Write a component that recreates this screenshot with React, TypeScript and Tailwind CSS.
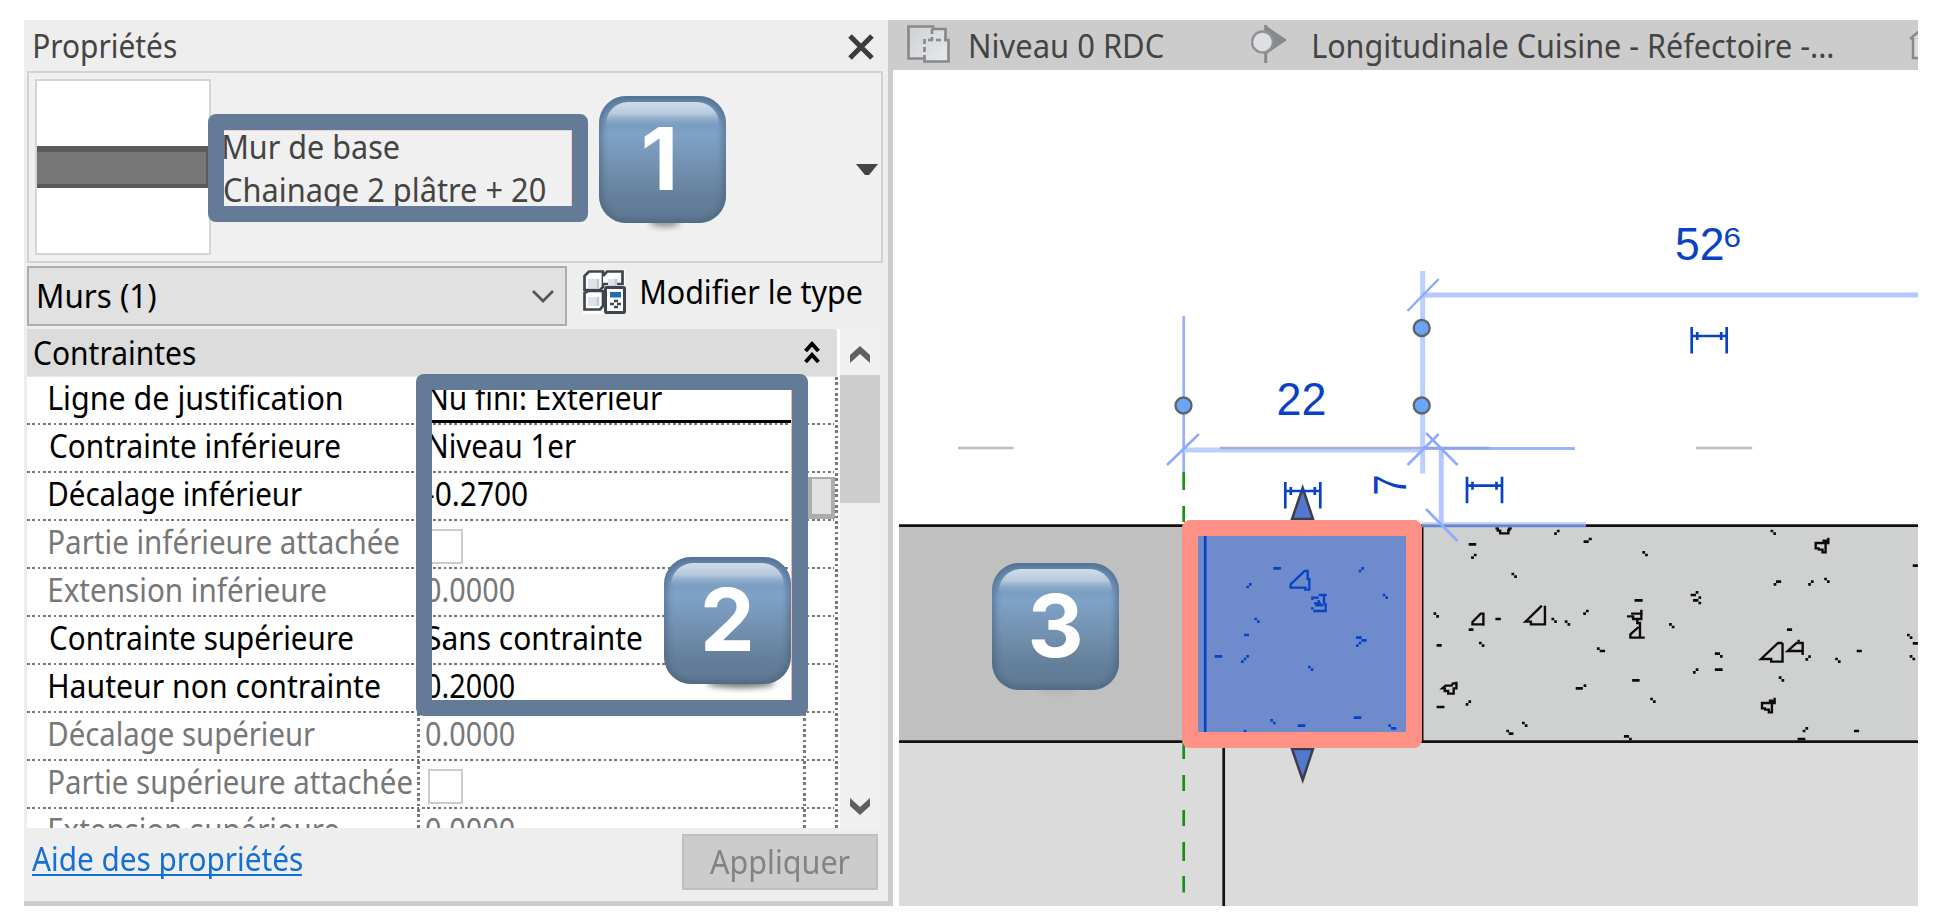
import { useLayoutEffect, useRef } from "react";
import type { ReactNode } from "react";

/** Single line of text whose inked width is fitted to `w` pixels. */
function Fit({ w, children, className = "" }: { w: number; children: string; className?: string }) {
  const ref = useRef<HTMLSpanElement>(null);
  useLayoutEffect(() => {
    const el = ref.current;
    const ctx = document.createElement("canvas").getContext("2d");
    if (!el || !ctx) return;
    const cs = getComputedStyle(el);
    ctx.font = `${cs.fontWeight} ${cs.fontSize} ${cs.fontFamily}`;
    const m = ctx.measureText(children);
    const s = w / (m.actualBoundingBoxLeft + m.actualBoundingBoxRight);
    el.style.transform = `translateX(${m.actualBoundingBoxLeft * s}px) scaleX(${s})`;
  }, [w, children]);
  return (
    <span className={"block shrink-0 whitespace-nowrap " + className} style={{ width: w }}>
      <span ref={ref} className="inline-block origin-left">
        {children}
      </span>
    </span>
  );
}

function Badge({ n, shadow, cx = 63.5 }: { n: string; shadow: "narrow" | "wide" | "faint"; cx?: number }) {
  const sh = {
    narrow: { cx: 66, rx: 15, o: 0.4 },
    wide: { cx: 77, rx: 34, o: 0.55 },
    faint: { cx: 66, rx: 20, o: 0.06 },
  }[shadow];
  return (
    <svg width="147" height="147" viewBox="-10 -10 147 147" className="block">
      <defs>
        <linearGradient id={"body" + n} x1="0" y1="0" x2="0" y2="1">
          <stop offset="0" stopColor="#6487ab" />
          <stop offset="0.3" stopColor="#7fa2c7" />
          <stop offset="0.48" stopColor="#7796b7" />
          <stop offset="0.8" stopColor="#647f9a" />
          <stop offset="1" stopColor="#5f7992" />
        </linearGradient>
        <linearGradient id={"gloss" + n} x1="0" y1="0" x2="0" y2="1">
          <stop offset="0" stopColor="#cfdde9" />
          <stop offset="0.45" stopColor="#b6cadc" />
          <stop offset="1" stopColor="#7fa2c7" stopOpacity="0" />
        </linearGradient>
        <filter id={"soft" + n} x="-50%" y="-50%" width="200%" height="200%">
          <feGaussianBlur stdDeviation="3" />
        </filter>
        <clipPath id={"clip" + n}>
          <rect width="127" height="127" rx="27" />
        </clipPath>
      </defs>
      <ellipse cx={sh.cx} cy="126" rx={sh.rx} ry="5" fill="#000" opacity={sh.o} filter={`url(#soft${n})`} />
      <rect width="127" height="127" rx="27" fill={`url(#body${n})`} />
      <g clipPath={`url(#clip${n})`}>
        <rect width="127" height="127" rx="27" fill="none" stroke="#425c78" strokeWidth="6" opacity="0.65" filter={`url(#soft${n})`} />
      </g>
      <path d="M7 32V28A22 22 0 0 1 29 6H98A22 22 0 0 1 120 28V32Z" fill={`url(#gloss${n})`} />
      <text x={cx} y="93.5" textAnchor="middle" fontSize="87" fontWeight="700" fill="#fff" className="font-['Inter',sans-serif]">
        {n}
      </text>
    </svg>
  );
}

type Row = { label: string; w: number; dim?: boolean; value?: string; vw?: number; indent?: "a" | "b"; box?: boolean; button?: boolean; underline?: boolean };

const rows: Row[] = [
  { label: "Ligne de justification", w: 292, value: "Nu fini: Extérieur", vw: 233, indent: "b", underline: true },
  { label: "Contrainte inférieure", w: 290, value: "Niveau 1er", vw: 147, indent: "b" },
  { label: "Décalage inférieur", w: 252, value: "-0.2700", vw: 101, button: true },
  { label: "Partie inférieure attachée", w: 349, dim: true, box: true },
  { label: "Extension inférieure", w: 276, dim: true, value: "0.0000", vw: 88 },
  { label: "Contrainte supérieure", w: 303, value: "Sans contrainte", vw: 216 },
  { label: "Hauteur non contrainte", w: 330, value: "0.2000", vw: 88 },
  { label: "Décalage supérieur", w: 265, dim: true, value: "0.0000", vw: 88 },
  { label: "Partie supérieure attachée", w: 362, dim: true, box: true },
  { label: "Extension supérieure", w: 289, dim: true, value: "0.0000", vw: 88 },
];

const dotsX = "bg-[repeating-linear-gradient(90deg,#777_0_2.67px,#fff_2.67px_5.34px)]";
const dotsY = "bg-[repeating-linear-gradient(180deg,#777_0_2.67px,#fff_2.67px_5.34px)]";

function GridRow({ r }: { r: Row }) {
  return (
    <div className={"flex h-12 shrink-0 flex-col " + (r.dim ? "text-[#777]" : "text-black")}>
      <div className="flex h-[45.5px]">
        <div className="flex w-[390px] items-center pb-[3px] pl-[23px]">
          <Fit w={r.w}>{r.label}</Fit>
        </div>
        <div className={"w-[3px] " + dotsY} />
        <div className={"relative flex w-[383px] items-center pb-[3px] " + (r.indent === "b" ? "pl-[9px]" : "pl-[6px]")}>
          {r.value && <Fit w={r.vw ?? 88}>{r.value}</Fit>}
          {r.box && <div className="mt-[9px] ml-[2px] h-[35px] w-[35px] border-2 border-[#ccc] bg-white" />}
          {r.underline && <div className="absolute bottom-0 left-0 h-[3px] w-full bg-black" />}
        </div>
        <div className={"w-[3px] " + dotsY} />
        <div className="w-[29px] pt-[4px]">
          {r.button && <div className="h-[42px] w-[30px] border-t-2 border-r-[5px] border-b-[5px] border-l-[6px] border-[#adadad] bg-[#e1e1e1]" />}
        </div>
        <div className={"w-[3px] " + dotsY} />
      </div>
      <div className={"h-[2.5px] w-[807px] " + dotsX} />
    </div>
  );
}

function PropertiesPanel() {
  return (
    <section className="flex h-[886px] w-[869px] shrink-0 flex-col border-r-[5px] border-b-[5px] border-[#ccc] bg-[#eee]">
      <header className="flex h-[51px] shrink-0 items-center justify-between pr-[13px] pl-[11px] text-[#444]">
        <Fit w={141}>Propriétés</Fit>
        <svg width="28" height="26" viewBox="0 0 28 26" className="mt-0.5">
          <path d="M3 2L25 24M25 2L3 24" stroke="#3c3c3c" strokeWidth="5" />
        </svg>
      </header>

      <div className="ml-[3px] flex h-[192px] w-[856px] shrink-0 items-center border-2 border-[#d2d2d2] bg-[#f0f0f0] pl-[6px]">
        <div className="flex h-[176px] w-[176px] flex-col justify-center border-2 border-[#d4d4d4] bg-white">
          <div className="h-[42px] border-t-[6px] border-r-[3px] border-b-[4px] border-[#5a5a5a] bg-[#777]" />
        </div>
        <div className="ml-[13px] flex flex-1 flex-col pt-[1px] text-[#444]">
          <Fit w={175} className="leading-[43px]">Mur de base</Fit>
          <Fit w={321} className="leading-[43px]">Chainage 2 plâtre + 20</Fit>
        </div>
        <svg width="22" height="12" viewBox="0 0 22 12" className="mt-[5px] mr-[3px]">
          <path d="M0 0H22L13 11H9Z" fill="#444" />
        </svg>
      </div>

      <div className="mt-[3px] ml-[3px] flex h-[60px] shrink-0">
        <div className="flex w-[540px] items-center justify-between border-[2.5px] border-[#adadad] bg-[#e1e1e1] pr-[10px] pl-[10px]">
          <Fit w={117} className="text-black">Murs (1)</Fit>
          <svg width="24" height="16" viewBox="0 0 24 16">
            <path d="M2 3L12 13L22 3" fill="none" stroke="#555" strokeWidth="2.7" />
          </svg>
        </div>
        <svg width="44" height="44" viewBox="0 0 44 44" className="mt-[4px] ml-[16px]">
          <path d="M0 5L5 0H42V44H0Z" fill="#fff" />
          <g fill="#fff" stroke="#3e454e" strokeWidth="2.7">
            <path d="M1.5 6L6 1.5H20V17L17 20H1.5Z" />
            <path d="M20 6L24 1.5H39.5V14H20" />
            <path d="M1.5 23L5 21H20V36L17 39.500H1.500Z" />
          </g>
          <path d="M5 9H15V18H5ZM25 9H33V15H25ZM5 27H15V36H5Z" fill="#dfe2e8" />
          <path d="M15 9V18M15 27V36M33 9V15" stroke="#c5c9d1" strokeWidth="2.500" />
          <rect x="22.500" y="17.500" width="19" height="25" rx="1" fill="#fff" stroke="#3e454e" strokeWidth="3" />
          <rect x="27" y="22" width="11" height="5.500" fill="#2469b3" />
          <path d="M27 34H31M34 34H38M31 31H35M31 37H35" stroke="#3e454e" strokeWidth="2.300" />
        </svg>
        <div className="ml-[15px] flex items-center pb-[9px] text-black">
          <Fit w={220}>Modifier le type</Fit>
        </div>
      </div>

      <div className="mt-[3px] ml-[3px] flex h-[499px] w-[853px] shrink-0 bg-white">
        <div className="flex h-full w-[813px] flex-col overflow-hidden">
          <div className="flex h-12 w-[810px] shrink-0 items-center justify-between border-b border-[#e8e8e8] bg-[#dcdcdc] pr-[17px] pl-[7px] text-black">
            <Fit w={161}>Contraintes</Fit>
            <svg width="16" height="24" viewBox="0 0 16 24" className="mb-[2px]">
              <path d="M1.500 11L8 4L14.500 11M1.500 22L8 15L14.500 22" fill="none" stroke="#000" strokeWidth="4" />
            </svg>
          </div>
          {rows.map((r) => (
            <GridRow key={r.label} r={r} />
          ))}
        </div>
        <div className="flex w-10 flex-col items-center bg-[#f0f0f0]">
          <div className="flex h-[46px] items-center pt-1">
            <svg width="20" height="17" viewBox="0 0 20 17">
              <path d="M0 9L10 0L20 9V17L10 8L0 17Z" fill="#606060" />
            </svg>
          </div>
          <div className="h-32 w-full bg-[#cdcdcd]" />
          <svg width="20" height="17" viewBox="0 0 20 17" className="mt-auto mb-[13px]">
            <path d="M0 8L10 17L20 8V0L10 9L0 0Z" fill="#606060" />
          </svg>
        </div>
      </div>

      <footer className="flex h-[73px] items-start justify-between pr-[10px] pl-[8px]">
        <a className="mt-[12px] border-b-[2.500px] border-[#1470d5] text-[#1470d5]">
          <Fit w={270} className="h-[34px] leading-[38px]">Aide des propriétés</Fit>
        </a>
        <button className="mt-[6px] flex h-[56px] w-[196px] items-center justify-center border-2 border-[#bfbfbf] bg-[#ccc] pb-[1px] text-[#838383]">
          <Fit w={140}>Appliquer</Fit>
        </button>
      </footer>
    </section>
  );
}

function ViewTabs() {
  return (
    <nav className="flex h-[50px] shrink-0 items-center overflow-hidden bg-[#ccc] text-[#444]">
      <svg width="44" height="40" viewBox="0 0 44 40" className="mb-[3px] ml-[14px] shrink-0">
        <defs>
          <linearGradient id="plan" x1="0" y1="0" x2="1" y2="1">
            <stop offset="0" stopColor="#cfd0d3" />
            <stop offset="1" stopColor="#e8e9eb" />
          </linearGradient>
        </defs>
        <path d="M1.500 2.500H26V5H38.500V16H41.500V37.500H17.500V34.500H1.500Z" fill="url(#plan)" stroke="#87898d" strokeWidth="2.700" />
        <path d="M25 5V16M21 16H40M17.500 15V34" fill="none" stroke="#87898d" strokeWidth="2.700" strokeDasharray="5 3" />
      </svg>
      <Fit w={193} className="mt-[1px] ml-[20px]">Niveau 0 RDC</Fit>
      <svg width="36" height="38" viewBox="0 0 36 38" className="mb-[2px] ml-[87px] shrink-0">
        <path d="M14 0L36 15L14 30Z" fill="#85888c" />
        <path d="M14.700 0V38" stroke="#85888c" strokeWidth="3" />
        <circle cx="11.500" cy="17" r="10.500" fill="#dedfe1" stroke="#909296" strokeWidth="2.500" />
      </svg>
      <Fit w={519} className="mt-[2px] ml-[27px]">Longitudinale Cuisine - Réfectoire -...</Fit>
      <svg width="30" height="38" viewBox="0 0 30 38" className="ml-[76px] shrink-0">
        <path d="M1 13L14 2L28 13M4 12V32H25V12" fill="#dcdddf" stroke="#87898d" strokeWidth="2.500" />
      </svg>
    </nav>
  );
}

const fwd = (pts: number[][]) => pts.map(([x, y]) => `M${x - 8} ${y + 4}h8M${x} ${y - 4}h8`).join("");
const back = (pts: number[][]) => pts.map(([x, y]) => `M${x - 8} ${y - 4}h8M${x} ${y + 4}h8`).join("");
const dash = (pts: number[][]) => pts.map(([a, b, y]) => `M${a} ${y}H${b}`).join("");

const aggregate = [
  dash([[201, 223, 193], [279, 295, 417], [201, 215, 449], [107, 122, 496], [107, 130, 681], [686, 710, 361], [679, 701, 601], [921, 944, 569], [1132, 1147, 449], [1336, 1351, 513], [1328, 1343, 753], [1163, 1186, 777], [1500, 1515, 257], [1500, 1515, 490], [514, 535, 625], [537, 545, 617], [537, 552, 185], [552, 561, 177], [576, 584, 506], [584, 600, 513], [311, 319, 753], [318, 332, 761], [655, 670, 769], [670, 678, 777], [921, 936, 521], [936, 944, 529], [1093, 1101, 313], [1100, 1115, 305], [850, 866, 345], [865, 873, 337], [857, 873, 361], [873, 881, 353], [873, 881, 369]]),
  fwd([[216, 229], [459, 157], [544, 397], [865, 573], [200, 669], [1186, 749], [1202, 309], [1194, 534]]),
  back([[334, 286], [717, 221], [1092, 157], [1249, 301], [106, 405], [451, 421], [490, 429], [239, 493], [795, 437], [740, 661], [365, 733], [1281, 541], [1116, 597], [1491, 469], [1499, 533]]),
].join("");

const aggregateStones =
  "M244 437V401H236L212 426V433H244M424 377V433H383V425H367L415 377M706 389V417H682V409H664M676 401H710M694 417V429H702V473M716 473H674V463L698 441M1119 489V545H1086V537H1056L1106 489H1119M1178 525V489H1166V479M1178 513H1134L1162 487M1253 173V189M1236 182H1253V189H1216V205H1228M1222 209H1236V217H1245V189M1096 653V669M1079 662H1096V669H1059V685H1071M1065 689H1079V697H1088V669M165 605V625H157V641H141V633H131V625H124L133 617H151L155 610H165M279 145H286V152H293V160H317V150H320V145H327";

const selected = [
  dash([[940, 963, 85], [852, 867, 285], [764, 787, 349], [1013, 1036, 557], [1181, 1204, 533], [1285, 1293, 557], [1293, 1309, 565], [851, 859, 573], [1188, 1205, 293], [1204, 1220, 301], [1196, 1204, 309], [1188, 1196, 317], [843, 851, 365], [851, 859, 357], [859, 867, 349]]),
  fwd([[867, 137], [1204, 89]]),
  back([[1276, 169], [891, 241], [1052, 385], [939, 545]]),
].join("");

const selectedStones =
  "M1043 89V117H1048V152M1048 149H1036V143H992V133L1034 93H1043M1076 165H1100M1092 165V194M1057 180V173H1076M1062 190H1084M1076 180V199M1066 196H1090M1097 190V213H1060M1053 205H1061";

function DimToggle({ x, y }: { x: number; y: number }) {
  return <path transform={`translate(${x} ${y})`} d="M0 -9V17.500M35 -9V17.500M0 0H35M5.500 -4V4M29.500 -4V4" stroke="#0a42c4" strokeWidth="2.700" />;
}

function Drawing() {
  return (
    <svg width="1025" height="836" viewBox="893 70 1025 836" fill="none" className="block shrink-0">
      <rect x="899" y="742" width="1019" height="164" fill="#dbdbdb" />
      <rect x="899" y="526" width="284" height="216" fill="#c0c0c0" />
      <rect x="1422" y="526" width="496" height="216" fill="#ced1d0" />
      <path d="M899 525.700H1918M899 741.700H1918" stroke="#111" strokeWidth="2.700" />
      <path d="M1422.500 526V742" stroke="#111" strokeWidth="2" />
      <path d="M1223.700 742V906" stroke="#111" strokeWidth="2.700" />
      <g transform="translate(1400 480) scale(0.34184 0.33333)" stroke="#0c0c0c">
        <path d={aggregate} strokeWidth="8" />
        <path d={aggregateStones} strokeWidth="7" />
      </g>

      <path d="M958 448H1013.700M1696 448H1752.300" stroke="#bebebe" strokeWidth="2.700" />
      <path d="M1183.700 472V490M1183.700 506V522M1183.700 742V759M1183.700 775V791M1183.700 810V826M1183.700 842V861M1183.700 876V892.500" stroke="#1a8f16" strokeWidth="2.700" />
      <path d="M1183.700 316V472" stroke="#94b0ff" strokeWidth="2.700" />
      <path d="M1422.700 271V473.500M1184 450H1424" stroke="#bccfff" strokeWidth="5" />
      <path d="M1422 295H1918M1441.300 449V525" stroke="#b4c8ff" strokeWidth="5" />
      <path d="M1220 448H1422" stroke="#a4b0d2" strokeWidth="2.600" />
      <path d="M1422 448.500H1575" stroke="#9ab5ff" strokeWidth="3" />
      <path d="M1422 448H1489.500" stroke="#8fa6e6" strokeWidth="2.400" />
      <path d="M1422 523.500H1586" stroke="#bccfff" strokeWidth="2.500" />
      <path d="M1422 526H1586" stroke="#6885d2" strokeWidth="2.700" />
      <path d="M1407.500 311L1438.700 279M1167 465L1199 434M1407.500 465L1438.700 434M1426 433L1457.500 465M1426 509L1457.500 541" stroke="#8caaff" strokeWidth="2.500" />
      <g fill="#6ba5f8" stroke="#5f6468" strokeWidth="2.300">
        <circle cx="1183.500" cy="405.500" r="8" />
        <circle cx="1421.700" cy="328" r="8" />
        <circle cx="1421.700" cy="405.500" r="8" />
      </g>
      <path d="M1302.700 488L1313 519H1292ZM1292 749H1313L1302.700 780Z" fill="#5379cf" stroke="#3c3f48" strokeWidth="2.500" />
      <DimToggle x={1285.300} y={491} />
      <DimToggle x={1691.700} y={336} />
      <DimToggle x={1467} y={485.700} />

      <g fill="#0a42c4" className="font-['Liberation_Sans',sans-serif]">
        <text x="1276.500" y="415" fontSize="45.500" textLength="50" lengthAdjust="spacingAndGlyphs">22</text>
        <text x="1675" y="260" fontSize="45.500" textLength="49.500" lengthAdjust="spacingAndGlyphs">52</text>
        <text x="1723.500" y="246.500" fontSize="27" textLength="17.500" lengthAdjust="spacingAndGlyphs">6</text>
        <text transform="translate(1406 495.500) rotate(-90)" fontSize="46" textLength="21" lengthAdjust="spacingAndGlyphs">7</text>
      </g>

      <rect x="1190" y="528" width="224" height="212" fill="#6f8bcb" />
      <g transform="translate(960 540) scale(0.33333)" stroke="#0a42c4">
        <path d={selected} strokeWidth="8" />
        <path d={selectedStones} strokeWidth="7" />
      </g>
      <path d="M1205.200 536V732" stroke="#0a42c4" strokeWidth="2.700" />
      <path d="M1198 536V732H1406V536ZM1190 520H1414A8 8 0 0 1 1422 528V740A8 8 0 0 1 1414 748H1190A8 8 0 0 1 1182 740V528A8 8 0 0 1 1190 520Z" fill="#ff9187" fillRule="evenodd" />
    </svg>
  );
}

function Frame({ className, children }: { className: string; children?: ReactNode }) {
  return (
    <div className={"absolute overflow-hidden rounded-lg border-16 border-[#637b96] " + className}>
      {children}
    </div>
  );
}

export default function App() {
  return (
    <div className="relative flex h-[922px] w-[1936px] overflow-hidden bg-white pt-5 pl-6 font-['Noto_Sans','Open_Sans',sans-serif] text-[32px] leading-[44px]">
      <PropertiesPanel />
      <main className="flex w-[1025px] shrink-0 flex-col">
        <ViewTabs />
        <Drawing />
      </main>

      <Frame className="top-[114px] left-[208px] h-[108px] w-[380px]">
        <div className="h-full border-t border-r border-[#f1cfcc]" />
      </Frame>
      <Frame className="top-[374px] left-[416px] h-[342px] w-[392px]">
        <div className="h-full border-r border-[#f1b9b4]" />
      </Frame>
      <div className="absolute top-[86px] left-[589px]">
        <Badge n="1" shadow="narrow" cx={60.5} />
      </div>
      <div className="absolute top-[547px] left-[654px]">
        <Badge n="2" shadow="wide" />
      </div>
      <div className="absolute top-[553px] left-[982px]">
        <Badge n="3" shadow="faint" />
      </div>
    </div>
  );
}
